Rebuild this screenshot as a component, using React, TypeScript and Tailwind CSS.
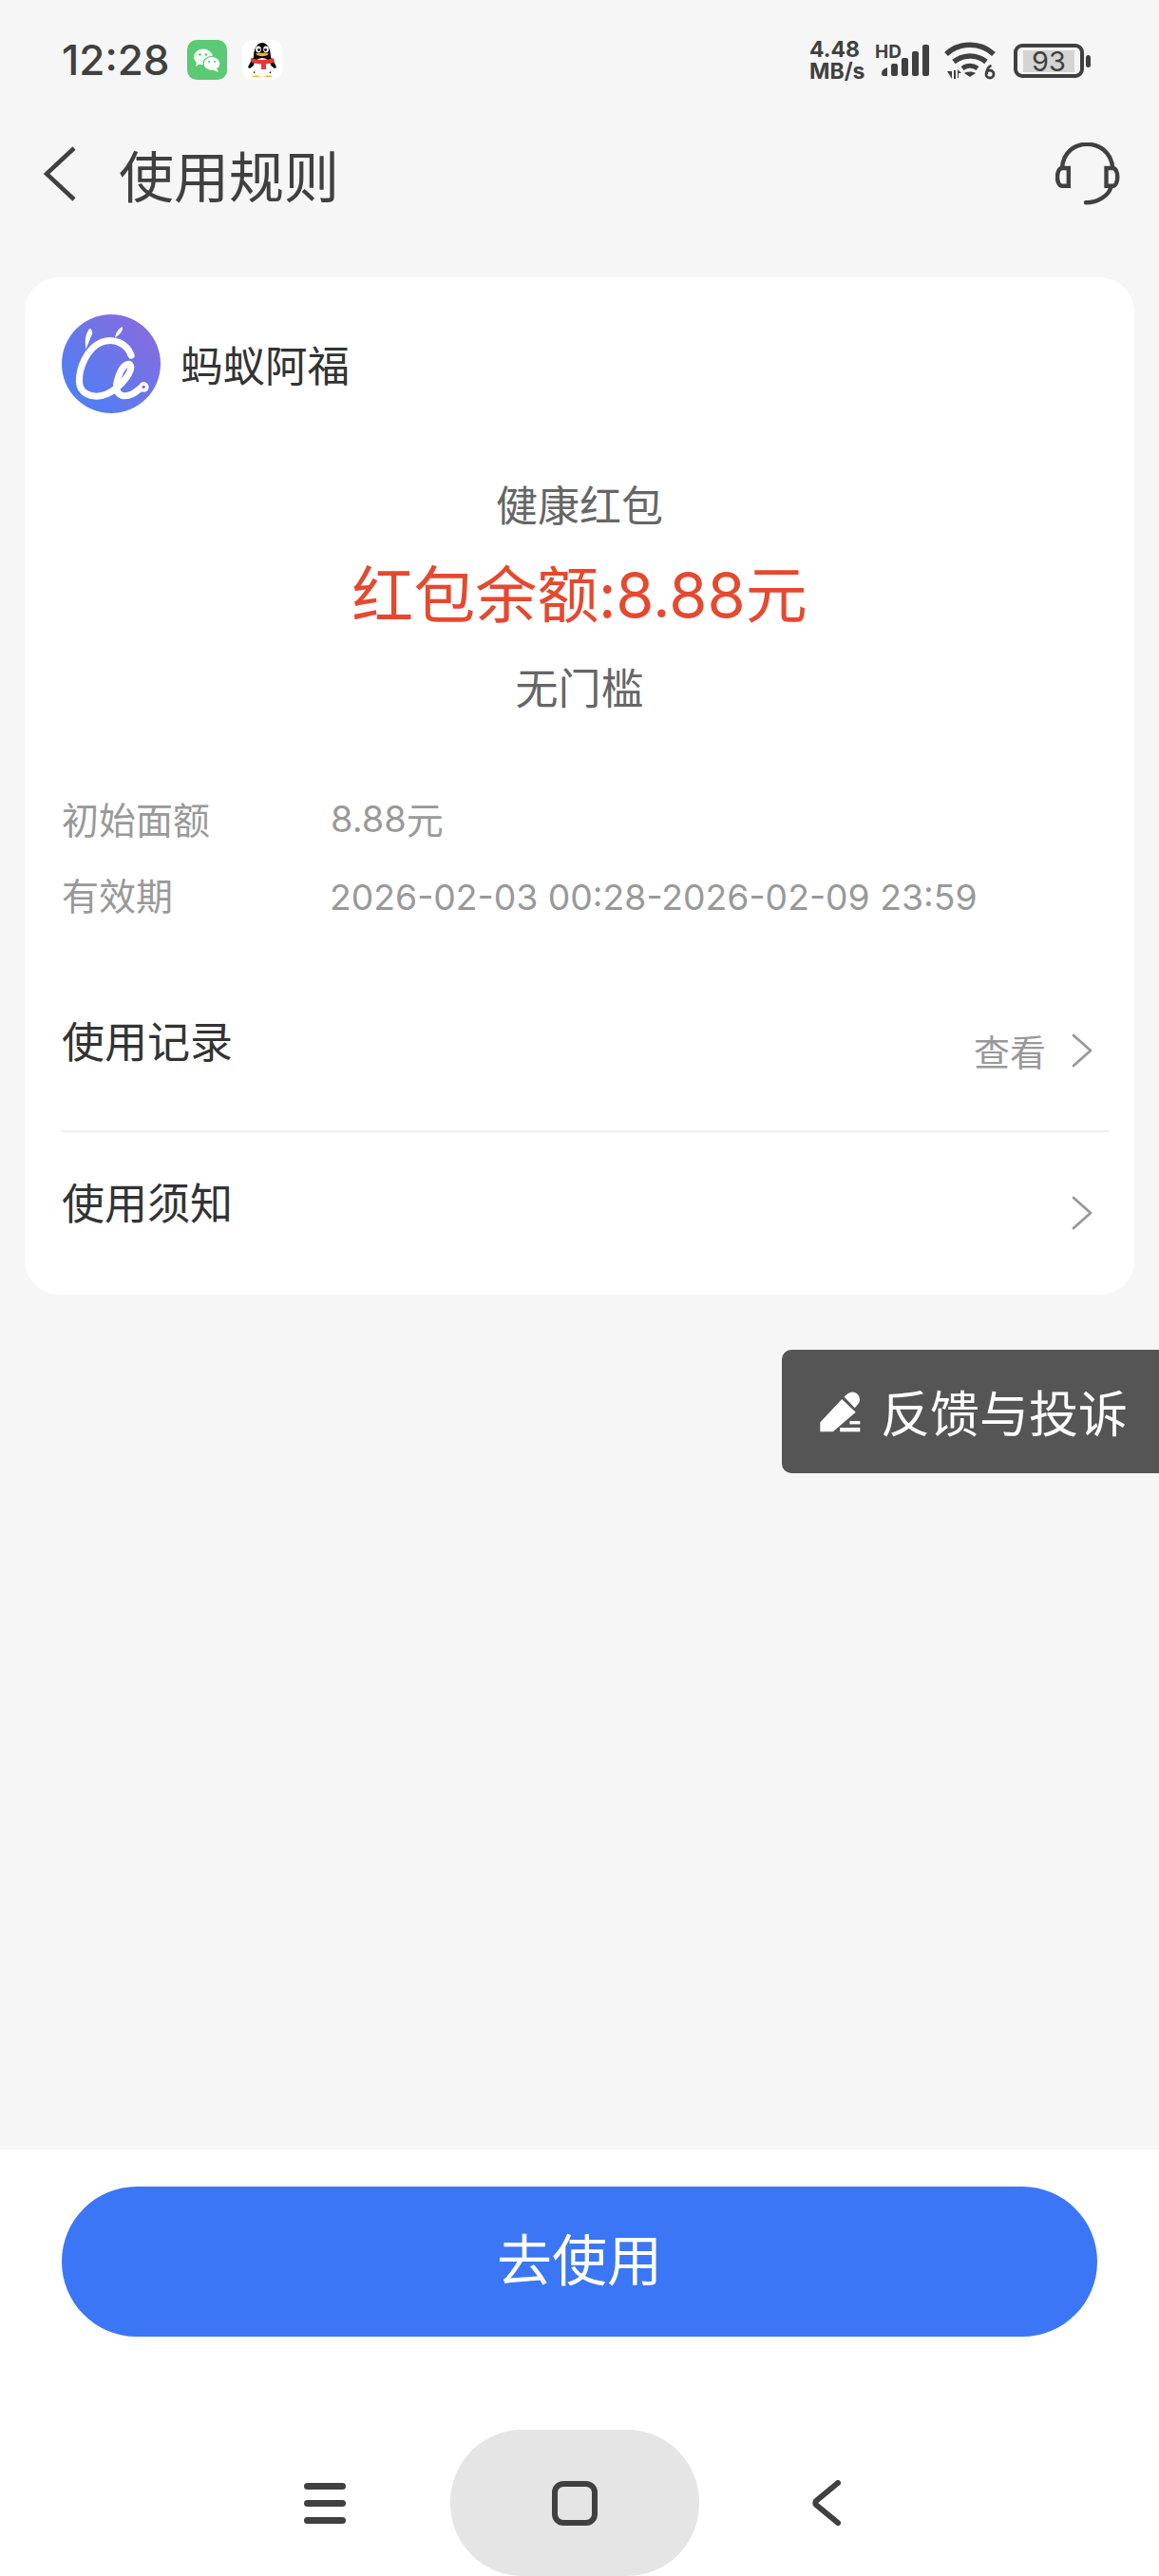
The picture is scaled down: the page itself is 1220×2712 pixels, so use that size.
const cjk = { fontFamily: '"Noto Sans CJK SC", sans-serif' };

function WeChatIcon() {
  return (
    <svg viewBox="0 0 42 42" className="h-[42px] w-[42px]">
      <rect width="42" height="42" rx="10" fill="#5cc974" />
      <ellipse cx="17" cy="18" rx="10" ry="8.5" fill="#fff" opacity="0.92" />
      <path d="M10 23l-1 5 5-3z" fill="#fff" opacity="0.92" />
      <ellipse cx="26" cy="25" rx="9" ry="7.5" fill="#fff" stroke="#5cc974" strokeWidth="1.2" />
      <path d="M31 30l2 4-5-2z" fill="#fff" />
      <circle cx="13.5" cy="15.5" r="1.2" fill="#5cc974" />
      <circle cx="20" cy="15.5" r="1.2" fill="#5cc974" />
      <circle cx="23" cy="23" r="1.1" fill="#5cc974" />
      <circle cx="29" cy="23" r="1.1" fill="#5cc974" />
    </svg>
  );
}

function QQIcon() {
  return (
    <svg viewBox="0 0 42 42" className="h-[42px] w-[42px]">
      <rect width="42" height="42" rx="10" fill="#fff" />
      <path d="M6 29c1-4 4-7 6-11 0-9 4-15 9-15s9 6 9 15c2 4 5 7 6 11l-2 1-4-3v8H12v-8l-4 3z" fill="#0b0b0b" />
      <ellipse cx="21" cy="29" rx="9.500" ry="10" fill="#fff" />
      <path d="M9 19c7 2.500 17 2.500 24 0l1 4c-3 1.500-6 2-9 2.500V31h-5v-5.500c-4 0-8-1-11-2.500z" fill="#e33b35" />
      <ellipse cx="17" cy="10" rx="2.800" ry="3.400" fill="#fff" />
      <ellipse cx="25" cy="10" rx="2.800" ry="3.400" fill="#fff" />
      <circle cx="17.500" cy="10.500" r="1.400" fill="#111" />
      <circle cx="24.500" cy="10.500" r="1.400" fill="#111" />
      <path d="M14 14.500c4-1 10-1 14 0-2 3.500-12 3.500-14 0z" fill="#f2b233" />
      <path d="M10 39c2-2 7-2 9 0zM23 39c2-2 7-2 9 0z" fill="#f2b233" />
    </svg>
  );
}

function SignalIcon() {
  return (
    <svg viewBox="0 0 60 40" className="h-[40px] w-[60px]" fill="#404040">
      <path d="M8 32c0-3 3-5 6-6v9H10c-1 0-2-1-2-3z" />
      <rect x="18" y="22" width="7" height="13" rx="2" />
      <rect x="29" y="16" width="7" height="19" rx="2" />
      <rect x="40" y="9" width="7" height="26" rx="2" />
      <rect x="51" y="2" width="7" height="33" rx="2" />
    </svg>
  );
}

function WifiIcon() {
  return (
    <svg viewBox="0 0 56 42" className="h-[42px] w-[56px]">
      <path d="M3 14C17 1 39 1 53 14" fill="none" stroke="#404040" strokeWidth="5.500" />
      <path d="M11 22c10-8 24-8 34 0" fill="none" stroke="#404040" strokeWidth="5.500" />
      <path d="M20 29c5-3.500 11-3.500 16 0" fill="none" stroke="#404040" strokeWidth="5" />
      <path d="M22 34c3-2 9-2 12 0l-6 4z" fill="#404040" />
      <path d="M4 32h5v8zM11 31h2v9h-2zM15 30l4 4h-3v5h-1z" fill="#404040" />
      <circle cx="49" cy="35" r="4" fill="none" stroke="#404040" strokeWidth="2.800" />
      <path d="M45.500 35c0-5 2-8 5-9" fill="none" stroke="#404040" strokeWidth="2.800" />
    </svg>
  );
}

function HeadsetIcon() {
  return (
    <svg viewBox="875 465 202 196" className="h-[66px] w-[68px]" fill="none" stroke="#404040" strokeWidth="13" strokeLinecap="round">
      <path d="M896 545c5-100 150-100 158 0" />
      <path d="M896 545h20v56h-20c-20 0-20-56 0-56z" />
      <path d="M1054 545h-20v56h20c20 0 20-56 0-56z" />
      <path d="M1048 605c-5 25-40 48-78 48" />
    </svg>
  );
}

function LogoMark() {
  return (
    <svg viewBox="195 153 310 310" className="h-[104px] w-[104px]">
      <defs>
        <linearGradient id="logoGrad" x1="0" y1="1" x2="1" y2="0">
          <stop offset="0" stopColor="#4484f8" />
          <stop offset="1" stopColor="#8f68dc" />
        </linearGradient>
      </defs>
      <circle cx="350" cy="308" r="155" fill="url(#logoGrad)" />
      <path
        d="M413 282C400 245 360 225 320 240C275 258 248 320 250 365C252 400 285 415 320 408C365 398 410 345 412 320C413 302 392 305 378 335C365 365 358 400 385 408C405 412 425 400 440 386"
        fill="none"
        stroke="#fff"
        strokeWidth="21"
        strokeLinecap="round"
      />
      <path d="M283 196c9 6 10 16 5 24l-17 42c-3-20-5-45 12-66z" fill="#fff" />
      <path d="M385 192c4 10-6 24-23 34 2-14 10-28 23-34z" fill="#fff" />
      <circle cx="452" cy="381" r="16" fill="#fff" />
      <circle cx="452" cy="381" r="5" fill="#8f68dc" />
    </svg>
  );
}

function Chevron() {
  return (
    <svg viewBox="0 0 22 36" className="h-[36px] w-[22px]" fill="none" stroke="#999" strokeWidth="2.800" strokeLinecap="round" strokeLinejoin="round">
      <path d="M2 2l18 16L2 34" />
    </svg>
  );
}

function PenIcon() {
  return (
    <svg viewBox="189 190 128 130" className="h-[43px] w-[43px]" fill="#fff">
      <path d="M189 288l69-74 44 42-72 62h-41z" />
      <path d="M265 207l13-11c10-7 22-6 31 4 8 10 8 22 0 31l-10 11z" />
      <rect x="283" y="284" width="33" height="10" />
      <rect x="252" y="305" width="64" height="13" />
    </svg>
  );
}

export default function App() {
  return (
    <div className="relative flex h-[2712px] w-[1220px] flex-col overflow-hidden bg-[#f6f6f6] text-[#333]" style={cjk}>
      {/* status bar */}
      <div className="flex h-[126px] items-start justify-between pl-[65px] pr-[72px] pt-[42px]">
        <div className="flex h-[42px] items-center">
          <span className="w-[132px] font-['Inter'] text-[44px] font-medium leading-none text-[#404040]">12:28</span>
          <WeChatIcon />
          <span className="ml-[16px]">
            <QQIcon />
          </span>
        </div>
        <div className="flex h-[44px] items-center">
          <div className="w-[60px] font-['Inter'] text-[23px] font-bold leading-[23px] text-[#404040]">
            <div>4.48</div>
            <div>MB/s</div>
          </div>
          <div className="relative ml-[8px] h-[40px] w-[62px]">
            <span className="absolute left-[1px] top-[1px] font-['Inter'] text-[19px] font-bold leading-none text-[#404040]">HD</span>
            <div className="absolute left-0 top-[1px]">
              <SignalIcon />
            </div>
          </div>
          <div className="ml-[11px]">
            <WifiIcon />
          </div>
          <div className="ml-[18px] flex h-[36px] w-[74px] items-center justify-center rounded-[9px] border-[4px] border-[#404040]">
            <div className="flex h-[23px] w-[54px] items-center justify-center bg-[#d4d4d4] font-['Inter'] text-[29px] leading-none text-[#404040]">93</div>
          </div>
          <div className="ml-[2px] h-[13px] w-[5px] rounded-sm bg-[#404040]" />
        </div>
      </div>

      {/* header */}
      <div className="flex h-[114px] items-center justify-between pl-[45px] pr-[41px]">
        <div className="flex items-center">
          <svg viewBox="0 0 36 58" className="h-[58px] w-[36px]" fill="none" stroke="#404040" strokeWidth="4.500">
            <path d="M33 2L4 29l29 27" />
          </svg>
          <h1 className="ml-[44px] text-[58px] font-normal leading-none text-[#404040]">使用规则</h1>
        </div>
        <HeadsetIcon />
      </div>

      {/* card */}
      <div className="mx-[26px] mt-[52px] h-[1071px] rounded-[36px] bg-white pl-[39px] pr-[26px] pt-[39px]">
        <div className="flex items-center">
          <LogoMark />
          <span className="ml-[21px] text-[44.500px] leading-none text-[#333]">蚂蚁阿福</span>
        </div>

        <div className="mr-[13px] mt-[73px] flex flex-col items-center">
          <div className="text-[44px] leading-none text-[#666]">健康红包</div>
          <div className="mt-[38px] text-[65px] leading-none text-[#e5492f]">
            <span>红包余额:</span>
            <span className="font-['Inter']">8.88</span>
            <span>元</span>
          </div>
          <div className="mt-[41px] text-[45px] leading-none text-[#666]">无门槛</div>
        </div>

        <div className="mt-[96px] flex h-[40px] items-center text-[39px] leading-none text-[#999]">
          <span className="w-[283px]">初始面额</span>
          <span className="pt-[2px] font-['Inter'] text-[38px]">8.88</span>
          <span className="text-[39px]">元</span>
        </div>
        <div className="mt-[40px] flex h-[40px] items-center text-[39px] leading-none text-[#999]">
          <span className="w-[283px]">有效期</span>
          <span className="-ml-[1px] pt-[7px] font-['Inter'] text-[37.300px]">2026-02-03 00:28-2026-02-09 23:59</span>
        </div>

        <div className="mt-[48px] flex h-[183px] justify-between border-b-2 border-[#f0f0f0]">
          <span className="mt-[63px] text-[45px] leading-none text-[#333]">使用记录</span>
          <div className="mr-[18px] mt-[75px] flex h-[44px] items-center">
            <span className="text-[38px] leading-none text-[#999]">查看</span>
            <span className="ml-[27px]">
              <Chevron />
            </span>
          </div>
        </div>
        <div className="flex justify-between">
          <span className="mt-[50px] text-[45px] leading-none text-[#333]">使用须知</span>
          <div className="mr-[18px] mt-[67px]">
            <Chevron />
          </div>
        </div>
      </div>

      {/* floating feedback tab */}
      <div className="absolute left-[823px] top-[1421px] flex h-[130px] w-[397px] items-center rounded-l-[10px] bg-[#555] pl-[40px] text-white">
        <PenIcon />
        <span className="ml-[21px] text-[52px] leading-none">反馈与投诉</span>
      </div>

      {/* bottom bar */}
      <div className="mt-auto h-[449px] bg-white">
        <div className="mx-[65px] mt-[39px] flex h-[158px] items-center justify-center rounded-full bg-[#3b76f6] pb-[10px] text-[58px] leading-none text-white">
          去使用
        </div>
        <div className="mt-[98px] flex h-[154px] items-center">
          <div className="ml-[320px] flex h-[43px] w-[44px] flex-col justify-between">
            <div className="h-[7px] rounded-full bg-[#404040]" />
            <div className="h-[7px] rounded-full bg-[#404040]" />
            <div className="h-[7px] rounded-full bg-[#404040]" />
          </div>
          <div className="ml-[110px] flex h-[154px] w-[262px] items-center justify-center rounded-[76px] bg-[#e5e5e5]">
            <div className="h-[47px] w-[48px] rounded-[12px] border-[6px] border-[#404040]" />
          </div>
          <svg viewBox="0 0 32 48" className="ml-[118px] h-[48px] w-[32px]" fill="none" stroke="#404040" strokeWidth="6" strokeLinecap="round" strokeLinejoin="round">
            <path d="M28 3L5 22c-1 2-1 3 0 4l23 19" />
          </svg>
        </div>
      </div>
    </div>
  );
}
